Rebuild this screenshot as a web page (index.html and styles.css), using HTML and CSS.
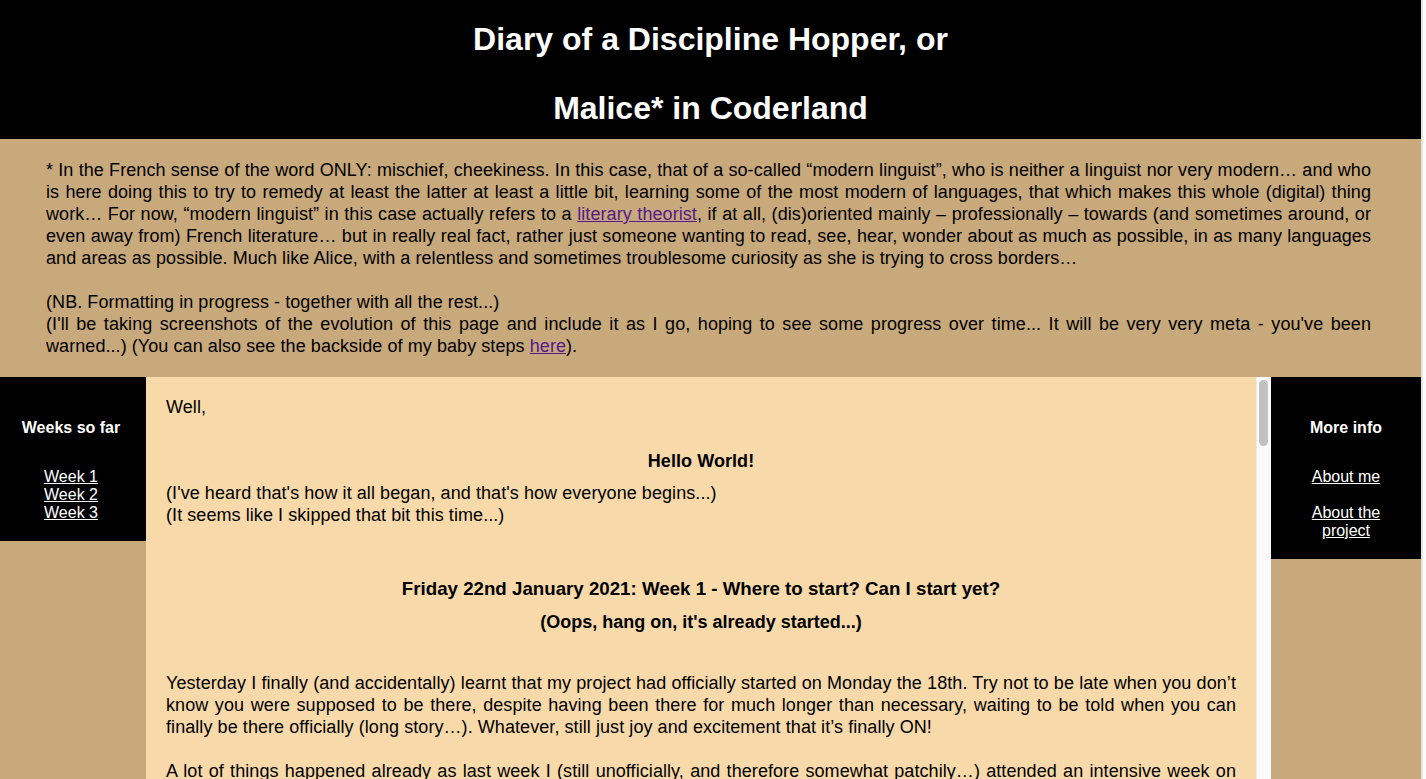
FILE: index.html
```html
<!DOCTYPE html>
<html lang="en">
<head>
<meta charset="utf-8">
<title>Diary of a Discipline Hopper, or Malice* in Coderland</title>
<link rel="stylesheet" href="styles.css">
</head>
<body>
<div class="page">
  <header class="masthead">
    <h1 class="title">
      <span class="title-line">Diary of a Discipline Hopper, or</span>
      <span class="title-line">Malice* in Coderland</span>
    </h1>
  </header>

  <section class="intro">
    <p class="intro-text">* In the French sense of the word ONLY: mischief, cheekiness. In this case, that of a so-called “modern linguist”, who is neither a linguist nor very modern… and who is here doing this to try to remedy at least the latter at least a little bit, learning some of the most modern of languages, that which makes this whole (digital) thing work… For now, “modern linguist” in this case actually refers to a <a class="visited-link" href="#">literary theorist</a>, if at all, (dis)oriented mainly – professionally – towards (and sometimes around, or even away from) French literature… but in really real fact, rather just someone wanting to read, see, hear, wonder about as much as possible, in as many languages and areas as possible. Much like Alice, with a relentless and sometimes troublesome curiosity as she is trying to cross borders…</p>
    <p class="intro-text">(NB. Formatting in progress - together with all the rest...)<br>(I'll be taking screenshots of the evolution of this page and include it as I go, hoping to see some progress over time... It will be very very meta - you've been warned...) (You can also see the backside of my baby steps <a class="visited-link" href="#">here</a>).</p>
  </section>

  <main class="layout">
    <nav class="sidebar">
      <h4 class="side-title">Weeks so far</h4>
      <ul class="side-list">
        <li><a class="side-link" href="#week1">Week 1</a></li>
        <li><a class="side-link" href="#week2">Week 2</a></li>
        <li><a class="side-link" href="#week3">Week 3</a></li>
      </ul>
    </nav>

    <div class="reader">
      <article class="diary">
        <p class="diary-lead">Well,</p>
        <h3 class="hello">Hello World!</h3>
        <p class="diary-aside">(I've heard that's how it all began, and that's how everyone begins...)<br>(It seems like I skipped that bit this time...)</p>

        <h3 class="week-title" id="week1">Friday 22nd January 2021: Week 1 - Where to start? Can I start yet?</h3>
        <h3 class="week-sub">(Oops, hang on, it's already started...)</h3>

        <p class="diary-text first">Yesterday I finally (and accidentally) learnt that my project had officially started on Monday the 18th. Try not to be late when you don’t know you were supposed to be there, despite having been there for much longer than necessary, waiting to be told when you can finally be there officially (long story…). Whatever, still just joy and excitement that it’s finally ON!</p>
        <p class="diary-text">A lot of things happened already as last week I (still unofficially, and therefore somewhat patchily…) attended an intensive week on digital methods for the humanities, which was a very welcome and very dense introduction to everything I did not know I did not know. Text encoding, data visualisation, mapping, network analysis, corpus tools… a whole new vocabulary to learn before even starting to learn the languages themselves.</p>
        <p class="diary-text">So this week was mostly about finding my feet: setting up a computer that does what I want rather than what it wants, installing a text editor, opening an account on a platform where people apparently keep their code, and discovering that “commit” does not mean what I thought it meant. It was also about reading, lots of reading, and making lists of things to read later, which is something I am very good at.</p>
        <p class="diary-text">And then, of course, there was HTML. The very first page. This very page, in fact, which at the time of writing consisted of a title, a few paragraphs and a great deal of hope. It is strangely moving to type a few angle brackets and see words appear in a browser window, as if by magic, except that it is not magic at all, just a long chain of very patient conventions.</p>
        <p class="diary-text">Next steps: learn how to make it look a little less like 1995, find out what CSS really stands for (Cascading Style Sheets, I am told, though the cascading part remains mysterious), and try not to get lost in every single tutorial that promises to explain everything in ten minutes.</p>

        <h3 class="week-title" id="week2">Friday 29th January 2021: Week 2 - Boxes inside boxes inside boxes</h3>
        <h3 class="week-sub">(Or how I learnt to stop worrying and love the margin)</h3>
        <p class="diary-text first">This week was all about layout. It turns out that everything on a web page is a box, and that boxes have margins, borders and padding, and that these three things are not at all the same, even though they look very much alike from a distance. I spent a surprising amount of time moving a paragraph two pixels to the left, then two pixels back to the right.</p>
        <p class="diary-text">I also discovered colours, and the fact that they can be named, numbered or mixed. Hence the rather autumnal look of this page, which I am quite fond of for now, although I suspect it will change many times before the end of the project. Consider yourself warned, again.</p>
        <p class="diary-text">The sidebars on either side are my first attempt at navigation. They do not do very much yet, but they are there, and that is already something. The links take you to the weeks so far, and to a little more information about me and about the project, for those who are curious enough.</p>

        <h3 class="week-title" id="week3">Friday 5th February 2021: Week 3 - Scrolling, and other small victories</h3>
        <h3 class="week-sub">(In which the page learns to move)</h3>
        <p class="diary-text first">This week the diary got its own little scrolling window, so that the title and the introduction stay where they are while the weeks keep piling up. It took me an entire afternoon to understand why the scrollbar was appearing on the wrong element, and another to understand why it was not appearing at all.</p>
        <p class="diary-text">More soon, hopefully with fewer detours. But then again, detours are rather the point of a discipline hopper, are they not?</p>
      </article>
      <div class="scrollbar" aria-hidden="true">
        <div class="scroll-thumb"></div>
      </div>
    </div>

    <aside class="sidebar">
      <h4 class="side-title">More info</h4>
      <p class="side-item"><a class="side-link" href="#about-me">About me</a></p>
      <p class="side-item"><a class="side-link" href="#about-project">About the project</a></p>
    </aside>
  </main>
</div>
</body>
</html>
```

FILE: styles.css
```css
html {
  background: #fbfbfb;
}

body {
  margin: 0;
  font-family: "Liberation Sans", Arial, Helvetica, sans-serif;
  color: #000;
}

.page {
  width: 1421px;
  border-right: 2px solid #e4e4e4;
  box-sizing: content-box;
}

.masthead {
  background: #000;
  color: #fff;
  padding: 21px 0 12px;
}

.title {
  margin: 0;
  display: flex;
  flex-direction: column;
  align-items: center;
  gap: 32px;
  font-size: 32px;
  line-height: 37px;
  font-weight: bold;
}

.intro {
  background: #c8a97b;
  padding: 20px 50px 20px 46px;
}

.intro-text {
  margin: 0;
  font-size: 18px;
  line-height: 22px;
  letter-spacing: 0.07px;
  text-align: justify;
}

.intro-text + .intro-text {
  margin-top: 22px;
}

.visited-link {
  color: #551a8b;
}

.layout {
  display: grid;
  grid-template-columns: 146px 1fr 150px;
  align-items: start;
  background: #c8a97b;
}

.sidebar {
  background: #000;
  color: #fff;
  text-align: center;
  padding: 21px 20px 19px;
  font-size: 16px;
  line-height: 18px;
}

.sidebar:first-child {
  padding-left: 18px;
  padding-right: 22px;
}

.side-title {
  margin: 21px 0 31px;
  font-size: 16px;
  line-height: 18px;
  font-weight: bold;
}

.side-list {
  list-style: none;
  margin: 0;
  padding: 0;
}

.side-item {
  margin: 0;
}

.side-item + .side-item {
  margin-top: 18px;
}

.side-link {
  color: #fff;
}

.reader {
  display: flex;
  height: 402px;
  background: #f8d9aa;
}

.diary {
  flex: 1;
  min-width: 0;
  overflow-y: auto;
  scrollbar-width: none;
  padding: 0 20px 30px;
  font-size: 18px;
  line-height: 22px;
  letter-spacing: 0.07px;
}

.diary::-webkit-scrollbar {
  display: none;
}

.scrollbar {
  flex: 0 0 15px;
  box-sizing: border-box;
  background: #fafafa;
  border-left: 1px solid #ececec;
  padding: 3px 3px 0 2px;
}

.scroll-thumb {
  height: 66px;
  background: #c1c1c1;
  border-radius: 5px;
}

.diary-lead {
  margin: 19px 0 0;
}

.hello {
  margin: 32px 0 10px;
  font-size: 18px;
  line-height: 22px;
  text-align: center;
}

.diary-aside {
  margin: 0;
}

.week-title {
  margin: 52px 0 0;
  font-size: 18.72px;
  line-height: 22px;
  letter-spacing: 0;
  text-align: center;
}

.week-sub {
  margin: 11px 0 0;
  font-size: 18px;
  line-height: 22px;
  letter-spacing: 0;
  text-align: center;
}

.diary-text {
  margin: 22px 0 0;
  text-align: justify;
}

.diary-text.first {
  margin-top: 39px;
}
```
